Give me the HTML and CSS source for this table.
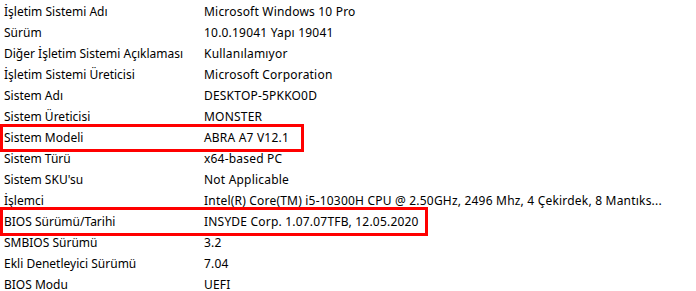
FILE: index.html
```html
<!DOCTYPE html>
<html lang="tr">
<head>
<meta charset="utf-8">
<title>Sistem Bilgisi</title>
<link rel="stylesheet" href="styles.css">
</head>
<body>
<div class="summary">
  <div class="row"><span class="item">İşletim Sistemi Adı</span><span class="value">Microsoft Windows 10 Pro</span></div>
  <div class="row"><span class="item">Sürüm</span><span class="value">10.0.19041 Yapı 19041</span></div>
  <div class="row"><span class="item">Diğer İşletim Sistemi Açıklaması</span><span class="value">Kullanılamıyor</span></div>
  <div class="row"><span class="item">İşletim Sistemi Üreticisi</span><span class="value">Microsoft Corporation</span></div>
  <div class="row"><span class="item">Sistem Adı</span><span class="value">DESKTOP-5PKKO0D</span></div>
  <div class="row"><span class="item">Sistem Üreticisi</span><span class="value">MONSTER</span></div>
  <div class="row"><span class="item">Sistem Modeli</span><span class="value">ABRA A7 V12.1</span></div>
  <div class="row"><span class="item">Sistem Türü</span><span class="value">x64-based PC</span></div>
  <div class="row"><span class="item">Sistem SKU'su</span><span class="value">Not Applicable</span></div>
  <div class="row"><span class="item">İşlemci</span><span class="value">Intel(R) Core(TM) i5-10300H CPU @ 2.50GHz, 2496 Mhz, 4 Çekirdek, 8 Mantıks...</span></div>
  <div class="row"><span class="item">BIOS Sürümü/Tarihi</span><span class="value">INSYDE Corp. 1.07.07TFB, 12.05.2020</span></div>
  <div class="row"><span class="item">SMBIOS Sürümü</span><span class="value">3.2</span></div>
  <div class="row"><span class="item">Ekli Denetleyici Sürümü</span><span class="value">7.04</span></div>
  <div class="row"><span class="item">BIOS Modu</span><span class="value">UEFI</span></div>

  <div class="mark mark-model"></div>
  <div class="mark mark-bios"></div>
</div>
</body>
</html>
```

FILE: styles.css
```css
html, body {
  margin: 0;
  padding: 0;
  background: #ffffff;
}

body {
  font-family: "Segoe UI", "Noto Sans", "Open Sans", sans-serif;
  font-size: 12px;
  color: #000000;
}

.summary {
  position: relative;
  display: flex;
  flex-direction: column;
  padding-top: 1px;
}

.row {
  display: grid;
  grid-template-columns: 200px 1fr;
  height: 21px;
  line-height: 21px;
  white-space: nowrap;
}

.item {
  padding-left: 4px;
  overflow: hidden;
}

.value {
  padding-left: 4px;
  overflow: hidden;
  letter-spacing: 0.2px;
}

/* red highlight frames drawn over selected rows */
.mark {
  position: absolute;
  left: 0;
  border: 3px solid #ff0000;
  box-sizing: border-box;
}

.mark-model {
  top: 124px;
  width: 304px;
  height: 28px;
}

.mark-bios {
  top: 207px;
  width: 428px;
  height: 29px;
}
```
